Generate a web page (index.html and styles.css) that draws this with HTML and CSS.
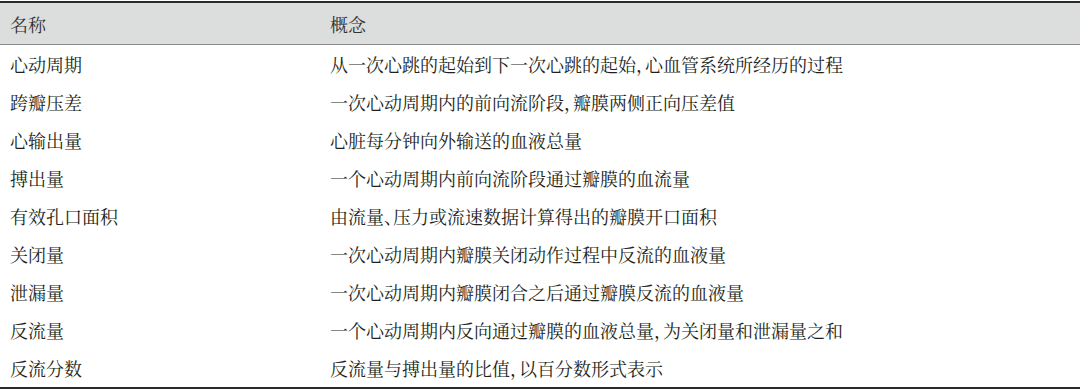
FILE: index.html
```html
<!DOCTYPE html>
<html lang="zh-CN">
<head>
<meta charset="utf-8">
<title>术语表</title>
<link rel="stylesheet" href="styles.css">
</head>
<body>
<table class="terms">
  <thead>
    <tr><th class="name">名称</th><th class="desc">概念</th></tr>
  </thead>
  <tbody>
    <tr><td>心动周期</td><td>从一次心跳的起始到下一次心跳的起始<span class="p">，</span>心血管系统所经历的过程</td></tr>
    <tr><td>跨瓣压差</td><td>一次心动周期内的前向流阶段<span class="p">，</span>瓣膜两侧正向压差值</td></tr>
    <tr><td>心输出量</td><td>心脏每分钟向外输送的血液总量</td></tr>
    <tr><td>搏出量</td><td>一个心动周期内前向流阶段通过瓣膜的血流量</td></tr>
    <tr><td>有效孔口面积</td><td>由流量<span class="p">、</span>压力或流速数据计算得出的瓣膜开口面积</td></tr>
    <tr><td>关闭量</td><td>一次心动周期内瓣膜关闭动作过程中反流的血液量</td></tr>
    <tr><td>泄漏量</td><td>一次心动周期内瓣膜闭合之后通过瓣膜反流的血液量</td></tr>
    <tr><td>反流量</td><td>一个心动周期内反向通过瓣膜的血液总量<span class="p">，</span>为关闭量和泄漏量之和</td></tr>
    <tr><td>反流分数</td><td>反流量与搏出量的比值<span class="p">，</span>以百分数形式表示</td></tr>
  </tbody>
</table>
</body>
</html>
```
FILE: styles.css
```css
html, body {
  margin: 0;
  padding: 0;
  background: #ffffff;
}
body {
  padding-top: 1px;
}
.terms {
  width: 1080px;
  border-collapse: collapse;
  font-family: "Noto Serif CJK SC", "Liberation Serif", "Noto Sans CJK SC", serif;
  font-size: 18px;
  color: #231f20;
  border-top: 2px solid #2a2a2a;
  border-bottom: 2px solid #2a2a2a;
}
.terms th {
  background: #dcdddd;
  font-weight: normal;
  text-align: left;
  height: 41px;
  padding: 0;
  vertical-align: middle;
  color: #333;
  border-bottom: 1px solid #8a8a8a;
}
.terms td {
  height: 38px;
  padding: 0;
  vertical-align: middle;
}
.terms th:first-child, .terms td:first-child {
  width: 320px;
  padding-left: 10px;
}
.p {
  font-feature-settings: "halt" 1;
}
```
